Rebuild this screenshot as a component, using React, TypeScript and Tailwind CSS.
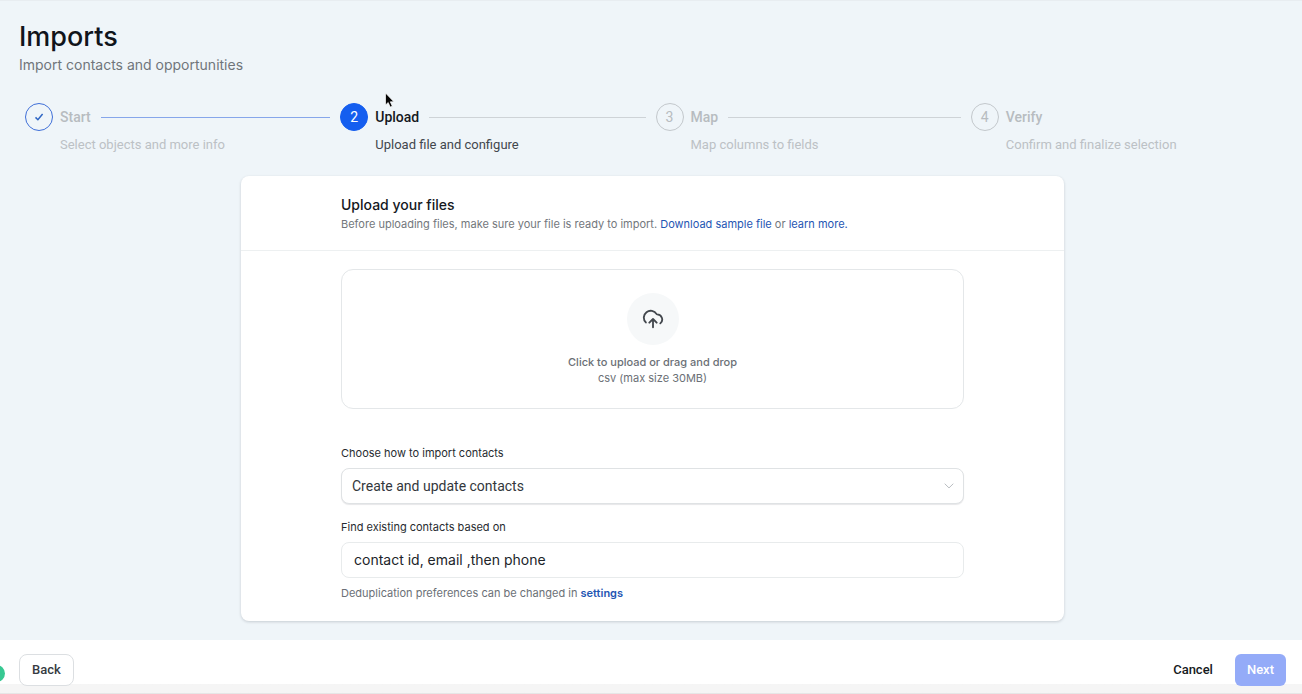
import React from "react";

type StepState = "done" | "current" | "upcoming";

interface Step {
  title: string;
  description: string;
  state: StepState;
}

const steps: Step[] = [
  { title: "Start", description: "Select objects and more info", state: "done" },
  { title: "Upload", description: "Upload file and configure", state: "current" },
  { title: "Map", description: "Map columns to fields", state: "upcoming" },
  { title: "Verify", description: "Confirm and finalize selection", state: "upcoming" },
];

const circleStyles: Record<StepState, string> = {
  done: "border-[#3f6fd8] text-[#2f66c4]",
  current: "border-[#155eef] bg-[#155eef] text-white",
  upcoming: "border-[#c3c8cc] text-[#b7bcc0]",
};

const titleStyles: Record<StepState, string> = {
  done: "text-[#b7bcc0]",
  current: "text-[#15181d]",
  upcoming: "text-[#b7bcc0]",
};

const descriptionStyles: Record<StepState, string> = {
  done: "text-[#bcc1c5]",
  current: "text-[#42474d]",
  upcoming: "text-[#bcc1c5]",
};

function CheckMark() {
  return (
    <svg width="10" height="10" viewBox="0 0 10 10" fill="none" aria-hidden="true">
      <path d="M1.5 5.4 3.9 7.7 8.6 2" stroke="currentColor" strokeWidth="1.5" />
    </svg>
  );
}

function StepItem({ step, number, last }: { step: Step; number: number; last: boolean }) {
  return (
    <li className="flex" aria-current={step.state === "current" ? "step" : undefined}>
      <span
        className={`flex size-7 shrink-0 items-center justify-center rounded-full border text-sm ${circleStyles[step.state]}`}
      >
        {step.state === "done" ? <CheckMark /> : number}
      </span>
      <div className="ml-[7px] min-w-0 flex-1">
        <div className="flex h-7 items-center">
          <span className={`text-sm font-medium ${titleStyles[step.state]}`}>{step.title}</span>
          {!last && (
            <span
              className={`mx-[10px] h-px flex-1 ${step.state === "done" ? "bg-[#86a6ea]" : "bg-[#ced3d7]"}`}
            />
          )}
        </div>
        <p className={`mt-1 text-[13px] leading-5 ${descriptionStyles[step.state]}`}>{step.description}</p>
      </div>
    </li>
  );
}

function UploadCloud() {
  return (
    <svg width="22" height="22" viewBox="0 0 24 24" fill="none" aria-hidden="true">
      <path
        d="M8 16l4-4m0 0l4 4m-4-4v9m8-4.257A5.5 5.5 0 0 0 16.5 7a.62.62 0 0 1-.534-.302A7.5 7.5 0 1 0 4.187 15.793"
        stroke="#42474d"
        strokeWidth="2"
        strokeLinecap="round"
        strokeLinejoin="round"
      />
    </svg>
  );
}

function UploadCard() {
  return (
    <section className="mx-auto mt-[21px] w-full max-w-[823px] rounded-lg bg-white shadow-[0_1px_3px_rgba(16,24,40,0.18)]">
      <header className="h-[75px] border-b border-[#edf0f1] px-6 pt-[19px] md:px-[100px]">
        <h2 className="text-sm leading-5 font-medium text-[#15181d]">Upload your files</h2>
        <p className="text-[11px] leading-[18px] text-[#73777c]">
          Before uploading files, make sure your file is ready to import.{" "}
          <a href="#sample" className="text-[#1f56b3]">Download sample file</a> or{" "}
          <a href="#learn" className="text-[#1f56b3]">learn more.</a>
        </p>
      </header>

      <div className="px-6 pt-[18px] pb-[19px] md:px-[100px]">
        <label className="flex h-[140px] cursor-pointer flex-col items-center rounded-xl border border-[#e4e7e9] pt-[23px] text-[11px] leading-4 text-[#6b7076]">
          <input type="file" accept=".csv" className="sr-only" />
          <span className="mb-[9px] flex size-[52px] items-center justify-center rounded-full bg-[#f6f8f9]">
            <UploadCloud />
          </span>
          <span className="font-medium">Click to upload or drag and drop</span>
          <span>csv (max size 30MB)</span>
        </label>

        <label htmlFor="mode" className="mt-[35px] block text-[11px] leading-[18px] text-[#272b30]">
          Choose how to import contacts
        </label>
        <div className="mt-[6px] grid items-center">
          <select
            id="mode"
            className="col-start-1 row-start-1 h-9 w-full appearance-none rounded-lg border border-[#dfe2e4] bg-white px-[10px] font-[Roboto,sans-serif] text-sm text-[#33373c] shadow-[0_1px_1px_rgba(16,24,40,0.1)]"
          >
            <option>Create and update contacts</option>
          </select>
          <svg
            className="pointer-events-none col-start-1 row-start-1 mr-[10px] justify-self-end"
            width="10"
            height="6"
            viewBox="0 0 10 6"
            fill="none"
            aria-hidden="true"
          >
            <path d="M.7.7 5 4.9 9.3.7" stroke="#b9bdc1" />
          </svg>
        </div>

        <label htmlFor="match" className="mt-[14px] block text-[11px] leading-[18px] text-[#272b30]">
          Find existing contacts based on
        </label>
        <input
          id="match"
          type="text"
          defaultValue="contact id, email ,then phone"
          className="mt-[6px] block h-9 w-full rounded-lg border border-[#e8ebec] bg-white px-3 pb-[2px] text-sm text-[#202429]"
        />
        <p className="mt-[6px] text-[11px] leading-[18px] text-[#6b7076]">
          Deduplication preferences can be changed in{" "}
          <a href="#settings" className="font-semibold text-[#1f56b3]">settings</a>
        </p>
      </div>
    </section>
  );
}

export default function App() {
  return (
    <div className="relative flex min-h-screen flex-col overflow-hidden bg-[#eff5f9] font-[Inter,sans-serif]">
      <main className="flex-1 border-t border-[#e8edf1] pr-4 pb-[19px] pl-[19px]">
        <h1 className="mt-[18px] text-[27px] leading-9 font-medium text-[#10141b]">Imports</h1>
        <p className="text-sm leading-5 text-[#70757b]">Import contacts and opportunities</p>
        <ol className="mt-7 ml-[6px] grid grid-cols-4 font-[Roboto,sans-serif]">
          {steps.map((step, index) => (
            <StepItem key={step.title} step={step} number={index + 1} last={index === steps.length - 1} />
          ))}
        </ol>
        <UploadCard />
      </main>

      <footer className="border-b border-[#e6e6e6] bg-linear-to-t from-[#f5f5f5] from-[9px] to-white to-[9px] font-[Roboto,sans-serif] text-[13px] font-medium">
        <div className="flex items-start pt-[14px] pr-4 pb-[7px] pl-[19px]">
          <button type="button" className="h-8 rounded-lg border border-[#dcdfe2] bg-white px-3 text-[#363b41]">
            Back
          </button>
          <button type="button" className="ml-auto h-8 px-[22px] text-[#15181d]">
            Cancel
          </button>
          <button type="button" className="h-8 rounded-md bg-[#94abf8] px-3 text-white">
            Next
          </button>
        </div>
      </footer>

      <span className="absolute bottom-[12px] -left-3 size-[17px] rounded-full bg-[#37c892]" />
      <svg
        className="pointer-events-none absolute top-[92px] left-[384px]"
        width="12"
        height="17"
        viewBox="0 0 12 17"
        aria-hidden="true"
      >
        <path d="M1.5 1v12l2.7-2.5 2 4.6 2.1-.9-2-4.4h3.6z" fill="#050505" stroke="#fff" strokeWidth=".7" />
      </svg>
    </div>
  );
}
